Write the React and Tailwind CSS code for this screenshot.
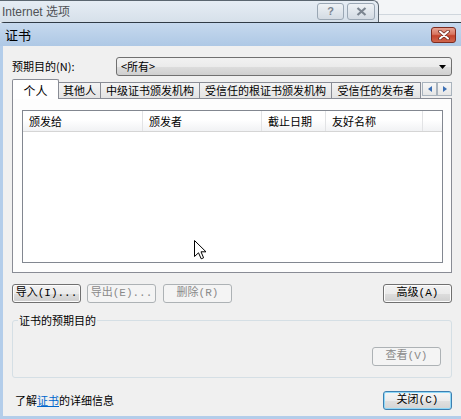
import clsx from "clsx";

const cjk = "font-['Noto_Sans_CJK_SC','Noto_Sans',sans-serif]";

const Btn = ({ children, disabled, primary, className }) => (
  <div
    className={clsx(
      "h-[19px] w-[69px] flex items-center justify-center rounded-[3px] border text-[11px] leading-none font-['Liberation_Mono','Noto_Sans_CJK_SC',monospace]",
      disabled
        ? "border-[#adb2b5] bg-[#f4f4f4] text-[#8a8a8a]"
        : primary
        ? "border-[#3c7fb1] shadow-[inset_0_0_0_1px_#8fd8f7] bg-[linear-gradient(to_bottom,#f6f6f6_0%,#ececec_50%,#e0e0e0_51%,#d4d4d4_100%)] text-black"
        : "border-[#707070] shadow-[inset_0_0_0_1px_#fcfcfc] bg-[linear-gradient(to_bottom,#f2f2f2_0%,#ebebeb_50%,#dddddd_51%,#cfcfcf_100%)] text-black",
      className
    )}
  >
    {children}
  </div>
);

const Tab = ({ label, width, active }) =>
  active ? (
    <div
      className={clsx(
        "h-[20px] border border-b-0 border-[#898c95] bg-white flex items-start justify-center pt-[2px] text-[12px] rounded-t-[2px] relative z-10",
        width
      )}
    >
      {label}
    </div>
  ) : (
    <div
      className={clsx(
        "h-[17px] border border-l-0 border-[#898c95] bg-[linear-gradient(to_bottom,#f4f4f4,#e3e3e3)] flex items-center justify-center text-[11px] leading-none",
        width
      )}
    >
      {label}
    </div>
  );

const ScrollBtn = ({ dir }) => (
  <div className="w-[15px] h-[14px] border border-[#a9b3bd] bg-[linear-gradient(to_bottom,#f7f7f7,#e6e6e6)] flex items-center justify-center">
    <svg width="4" height="6" viewBox="0 0 4 6">
      {dir === "left" ? <path d="M4 0 L0 3 L4 6 Z" fill="#3c6fb4" /> : <path d="M0 0 L4 3 L0 6 Z" fill="#3c6fb4" />}
    </svg>
  </div>
);

const cols = [
  { label: "颁发给", w: "w-[120px]" },
  { label: "颁发者", w: "w-[119px]" },
  { label: "截止日期", w: "w-[64px]" },
  { label: "友好名称", w: "w-[97px]" },
];

export default function App() {
  return (
    <div className={clsx("w-[461px] h-[419px] overflow-hidden flex flex-col bg-[#eef1f4] text-black relative", cjk)}>
      {/* background window title */}
      <div className="h-[22px] flex shrink-0">
        <div className="w-[379px] h-[22px] rounded-tr-[6px] border-r border-t border-[#5b6670] bg-[linear-gradient(to_bottom,#e6edf4,#d6e0ea)] flex items-center pl-[2px] pr-[3px]">
          <span className="text-[12px] text-[#4f5256] font-['Liberation_Sans','Noto_Sans_CJK_SC',sans-serif]">
            Internet 选项
          </span>
          <div className="ml-auto flex gap-[3px]">
            <div className="w-[27px] h-[17px] rounded-[3px] border border-[#9aa7b4] bg-[linear-gradient(to_bottom,#eef2f6,#d3dbe3)] flex items-center justify-center text-[11px] font-bold text-[#7b8590] font-['Liberation_Sans',sans-serif]">
              ?
            </div>
            <div className="w-[28px] h-[17px] rounded-[3px] border border-[#9aa7b4] bg-[linear-gradient(to_bottom,#eef2f6,#d3dbe3)] flex items-center justify-center">
              <svg width="11" height="9" viewBox="0 0 11 9">
                <path d="M1.5 1 L9.5 8 M9.5 1 L1.5 8" stroke="#7b8590" strokeWidth="2.2" />
              </svg>
            </div>
          </div>
        </div>
        <div className="flex-1 flex flex-col">
          <div className="h-[14px] bg-[#f3f5f7]" />
          <div className="h-px bg-[#cfd6dd]" />
          <div className="flex-1 bg-[#f1f3f5]" />
        </div>
      </div>

      {/* certificate dialog */}
      <div className="flex-1 flex flex-col border-t border-[#2f3a45] rounded-tl-[4px]">
        <div className="h-[23px] shrink-0 bg-[linear-gradient(to_bottom,#c6d9ee,#aec8e5)] flex items-center pl-[5px] pr-[5px]">
          <span className="text-[13px] leading-none">证书</span>
          <div className="ml-auto w-[25px] h-[16px] rounded-[3px] border border-[#7d2b1f] bg-[linear-gradient(to_bottom,#e8a494_0%,#d8755f_45%,#c4432b_55%,#d0664d_100%)] flex items-center justify-center">
            <svg width="12" height="10" viewBox="0 0 12 10">
              <path d="M2 1.5 L10 8.5 M10 1.5 L2 8.5" stroke="#6b2a20" strokeWidth="3.6" strokeLinecap="round" />
              <path d="M2 1.5 L10 8.5 M10 1.5 L2 8.5" stroke="#ffffff" strokeWidth="2" strokeLinecap="round" />
            </svg>
          </div>
        </div>

        <div className="flex-1 flex flex-col bg-[#f0f0f0] border-l-[3px] border-b-[3px] border-[#b3cdea] pl-[9px] pr-[9px] text-[11px]">
          {/* purpose row */}
          <div className="mt-[11px] flex items-center h-[19px] shrink-0">
            <span className="w-[104px] leading-none">预期目的(N):</span>
            <div className="flex-1 h-[19px] rounded-[3px] border border-[#707070] bg-[linear-gradient(to_bottom,#f2f2f2_0%,#ebebeb_50%,#dddddd_51%,#cfcfcf_100%)] flex items-center pl-[4px] pr-[5px]">
              <span className="leading-none">&lt;所有&gt;</span>
              <svg className="ml-auto" width="7" height="4" viewBox="0 0 7 4">
                <path d="M0 0 L7 0 L3.5 4 Z" fill="#000" />
              </svg>
            </div>
          </div>

          {/* tabs */}
          <div className="mt-[3px] h-[20px] -mb-px flex items-end shrink-0 relative z-10">
            <Tab label="个人" width="w-[47px]" active />
            <Tab label="其他人" width="w-[42px]" />
            <Tab label="中级证书颁发机构" width="w-[99px]" />
            <Tab label="受信任的根证书颁发机构" width="w-[132px]" />
            <Tab label="受信任的发布者" width="w-[89px]" />
            <div className="ml-px mb-[3px] flex">
              <ScrollBtn dir="left" />
              <ScrollBtn dir="right" />
            </div>
          </div>

          {/* tab panel */}
          <div className="h-[175px] shrink-0 border border-[#898c95] bg-[#fdfdfd] pt-[11px] pl-[9px] pr-[8px] relative">
            <div className="h-[153px] border border-[#828790] bg-white flex flex-col">
              <div className="h-[21px] flex bg-[linear-gradient(to_bottom,#ffffff_0%,#ffffff_45%,#f1f2f4_100%)] border-b border-[#d5d5d5]">
                {cols.map((c) => (
                  <div key={c.label} className={clsx("h-full flex items-center pl-[6px] border-r border-[#e2e3e5] leading-none", c.w)}>
                    {c.label}
                  </div>
                ))}
                <div className="flex-1" />
              </div>
              <div className="flex-1" />
            </div>
            <svg className="absolute left-[181px] top-[141px]" width="13" height="20" viewBox="0 0 13 20">
              <path d="M0.5 0.5 L0.5 16.5 L4.5 12.8 L7.2 18.8 L9.6 17.8 L7 11.8 L12 11.8 Z" fill="#fff" stroke="#000" strokeWidth="1" strokeLinejoin="miter" />
            </svg>
          </div>

          {/* buttons row */}
          <div className="mt-[11px] flex shrink-0">
            <Btn>导入(I)...</Btn>
            <Btn disabled className="ml-[6px]">导出(E)...</Btn>
            <Btn disabled className="ml-[7px]">删除(R)</Btn>
            <Btn className="ml-auto">高级(A)</Btn>
          </div>

          {/* purposes group */}
          <div className="mt-[17px] h-[58px] shrink-0 border border-[#d5dfe5] rounded-[3px] flex flex-col">
            <div className="-mt-[8px] ml-[5px] px-[1px] bg-[#f0f0f0] self-start leading-[14px]">证书的预期目的</div>
            <div className="flex-1 flex items-end justify-end pr-[10px] pb-[11px]">
              <Btn disabled>查看(V)</Btn>
            </div>
          </div>

          {/* bottom */}
          <div className="mt-[13px] flex items-center shrink-0">
            <span className="ml-[3px] leading-none">
              了解<span className="text-[#0066cc] underline">证书</span>的详细信息
            </span>
            <Btn primary className="ml-auto">关闭(C)</Btn>
          </div>
        </div>
      </div>
    </div>
  );
}
